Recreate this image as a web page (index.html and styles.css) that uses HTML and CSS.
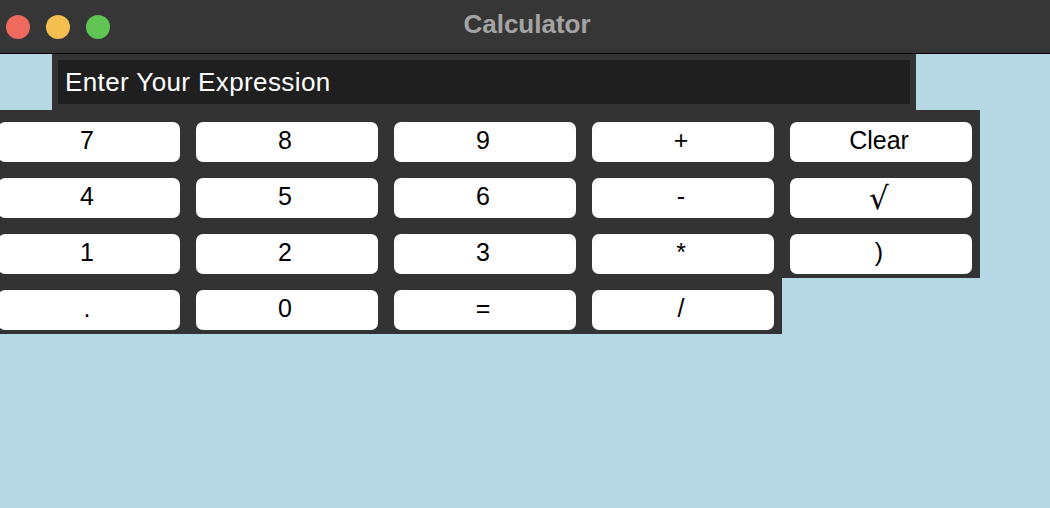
FILE: index.html
```html
<!DOCTYPE html>
<html>
<head>
<meta charset="utf-8">
<title>Calculator</title>
<link rel="stylesheet" href="styles.css">
</head>
<body>
<div class="window">
  <header class="titlebar">
    <div class="lights">
      <span class="light red"></span>
      <span class="light yellow"></span>
      <span class="light green"></span>
    </div>
    <div class="title">Calculator</div>
    <div></div>
  </header>
  <main class="content">
    <div class="entry-frame">
      <div class="entry">Enter Your Expression</div>
    </div>
    <div class="keypad">
      <div class="row row-full">
        <button class="key">7</button>
        <button class="key">8</button>
        <button class="key">9</button>
        <button class="key">+</button>
        <button class="key">Clear</button>
      </div>
      <div class="row row-full">
        <button class="key">4</button>
        <button class="key">5</button>
        <button class="key">6</button>
        <button class="key">-</button>
        <button class="key key-sqrt">√</button>
      </div>
      <div class="row row-full">
        <button class="key">1</button>
        <button class="key">2</button>
        <button class="key">3</button>
        <button class="key">*</button>
        <button class="key">)</button>
      </div>
      <div class="row row-short">
        <button class="key">.</button>
        <button class="key">0</button>
        <button class="key">=</button>
        <button class="key">/</button>
      </div>
    </div>
  </main>
</div>
</body>
</html>
```
FILE: styles.css
```css
html, body {
  margin: 0;
  padding: 0;
}
body {
  background: #b5d8e4;
  font-family: "Liberation Sans", Arial, "DejaVu Sans", sans-serif;
  width: 1050px;
  height: 508px;
  overflow: hidden;
}
.titlebar {
  height: 53px;
  background: #363636;
  border-bottom: 1px solid #000;
  display: grid;
  grid-template-columns: 1fr auto 1fr;
  align-items: center;
}
.lights {
  display: flex;
  gap: 16px;
  padding-left: 6px;
}
.light {
  width: 24px;
  height: 24px;
  border-radius: 50%;
  display: block;
}
.red { background: #ee6a5f; }
.yellow { background: #f5bf4f; }
.green { background: #61c554; }
.title {
  color: #a4a4a4;
  font-weight: bold;
  font-size: 26px;
  padding-left: 4px;
  padding-bottom: 4px;
}
.content {
  display: flex;
  flex-direction: column;
  align-items: flex-start;
}
.entry-frame {
  margin-left: 52px;
  width: 864px;
  box-sizing: border-box;
  background: #333333;
  padding: 6px 6px 6px 6px;
}
.entry {
  height: 44px;
  background: #1f1f1f;
  color: #ffffff;
  font-size: 26px;
  letter-spacing: 0.4px;
  display: flex;
  align-items: center;
  padding-left: 7px;
}
.keypad {
  margin-left: -10px;
  display: flex;
  flex-direction: column;
}
.row {
  display: flex;
  gap: 16px;
  padding: 12px 8px 4px 8px;
  background: #333333;
  box-sizing: border-box;
}
.row-full { width: 990px; }
.row-short { width: 792px; }
.key {
  width: 182px;
  height: 40px;
  border: none;
  border-radius: 7px;
  background: #ffffff;
  color: #000000;
  font-family: "Liberation Sans", Arial, "DejaVu Sans", sans-serif;
  font-size: 25px;
  padding: 0 4px 3px 0;
  margin: 0;
  display: flex;
  align-items: center;
  justify-content: center;
}
.key-sqrt {
  font-family: "DejaVu Sans", sans-serif;
  font-size: 31px;
  padding-bottom: 1px;
}
```
